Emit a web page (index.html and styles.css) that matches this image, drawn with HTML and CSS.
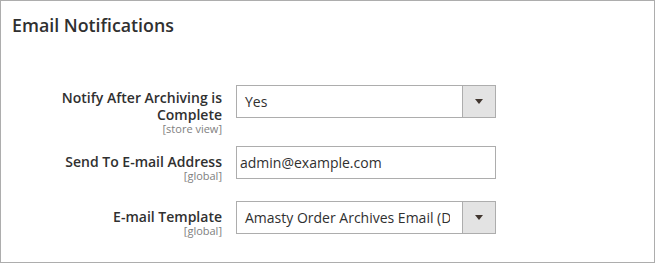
FILE: index.html
```html
<!DOCTYPE html>
<html lang="en">
  <head>
    <meta charset="UTF-8" />
    <meta name="viewport" content="width=device-width, initial-scale=1.0" />
    <title>Email Notifications</title>
    <link rel="stylesheet" href="styles.css">
  </head>
  <body>
    <div class="panel">
      <h2 class="panel-title">Email Notifications</h2>

      <div class="fields">
        <div class="field field-tall">
          <div class="field-label">
            <span class="label-text">Notify After Archiving is Complete</span>
            <span class="scope">[store view]</span>
          </div>
          <div class="select">
            <span class="select-value">Yes</span>
            <span class="select-arrow"></span>
          </div>
        </div>

        <div class="field">
          <div class="field-label">
            <span class="label-text">Send To E-mail Address</span>
            <span class="scope">[global]</span>
          </div>
          <input class="text-input" type="text" value="admin@example.com" />
        </div>

        <div class="field">
          <div class="field-label">
            <span class="label-text">E-mail Template</span>
            <span class="scope">[global]</span>
          </div>
          <div class="select">
            <span class="select-value">Amasty Order Archives Email (Default)</span>
            <span class="select-arrow"></span>
          </div>
        </div>
      </div>
    </div>
  </body>
</html>
```

FILE: styles.css
```css
* {
  margin: 0;
  padding: 0;
  box-sizing: border-box;
}
body {
  font-family: "Open Sans", "Liberation Sans", sans-serif;
  background: #fff;
  color: #303030;
}
.panel {
  width: 655px;
  height: 263px;
  border: 1px solid #adadad;
  padding: 13px 11px 0;
}
.panel-title {
  font-size: 17.8px;
  font-weight: 600;
  line-height: 23px;
  color: #303030;
}
.fields {
  margin-top: 48px;
}
.field {
  display: flex;
  align-items: flex-start;
  gap: 14px;
  margin-bottom: 20px;
}
.field-tall {
  margin-bottom: 12px;
}
.field-label {
  width: 210px;
  text-align: right;
  padding-top: 7px;
}
.field-tall .field-label {
  padding-top: 4px;
}
.label-text {
  display: block;
  font-size: 14px;
  font-weight: 600;
  line-height: 17px;
  color: #303030;
}
.scope {
  display: block;
  font-size: 11px;
  line-height: 11px;
  color: #808080;
}
.select {
  width: 260px;
  height: 33px;
  border: 1px solid #adadad;
  display: flex;
  align-items: center;
  background: #fff;
}
.select-value {
  flex: 1;
  padding-left: 8px;
  font-size: 14px;
  line-height: 19px;
  white-space: nowrap;
  overflow: hidden;
}
.select-arrow {
  width: 33px;
  height: 100%;
  margin-left: 12px;
  border-left: 1px solid #adadad;
  background: #e3e3e3;
  display: flex;
  align-items: center;
  justify-content: center;
}
.select-arrow::after {
  content: "";
  border-left: 4px solid transparent;
  border-right: 4px solid transparent;
  border-top: 5px solid #41362f;
}
.text-input {
  width: 260px;
  height: 33px;
  border: 1px solid #adadad;
  padding: 0 3px;
  font-family: "Open Sans", "Liberation Sans", sans-serif;
  font-size: 14px;
  color: #303030;
  outline: none;
}
```
